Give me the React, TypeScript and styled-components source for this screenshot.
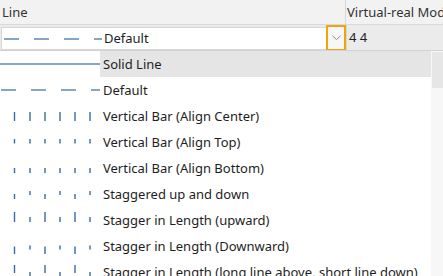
import React from 'react'
import styled, { createGlobalStyle } from 'styled-components'

type LineKind =
  | 'solid'
  | 'dash'
  | 'center'
  | 'top'
  | 'bottom'
  | 'stagger'
  | 'upward'
  | 'downward'
  | 'longShort'

const options: { kind: LineKind; label: string }[] = [
  { kind: 'solid', label: 'Solid Line' },
  { kind: 'dash', label: 'Default' },
  { kind: 'center', label: 'Vertical Bar (Align Center)' },
  { kind: 'top', label: 'Vertical Bar (Align Top)' },
  { kind: 'bottom', label: 'Vertical Bar (Align Bottom)' },
  { kind: 'stagger', label: 'Staggered up and down' },
  { kind: 'upward', label: 'Stagger in Length (upward)' },
  { kind: 'downward', label: 'Stagger in Length (Downward)' },
  { kind: 'longShort', label: 'Stagger in Length (long line above, short line down)' },
]

const BAR_X = [14.5, 30, 45, 60, 75, 90]

// [even bars, odd bars] as y1/y2 inside a 26px row
const barSpans: Record<string, [[number, number], [number, number]]> = {
  center: [[9, 18], [9, 18]],
  top: [[10, 14.5], [10, 14.5]],
  bottom: [[13, 18], [13, 18]],
  stagger: [[13, 18], [10, 14]],
  upward: [[5, 15], [10, 15]],
  downward: [[13.5, 21], [12.5, 16.5]],
  longShort: [[6, 14], [13, 17]],
}

function LinePreview({ kind }: { kind: LineKind }) {
  if (kind === 'solid') {
    return (
      <svg width="100" height="26">
        <line x1="0" y1="13" x2="100" y2="13" stroke="#86a6c6" strokeWidth="2" />
      </svg>
    )
  }
  if (kind === 'dash') {
    return (
      <svg width="100" height="26">
        <line x1="1" y1="13" x2="100" y2="13" stroke="#86a6c6" strokeWidth="2" strokeDasharray="15 15" />
      </svg>
    )
  }
  const spans = barSpans[kind]
  return (
    <svg width="100" height="26">
      {BAR_X.map((x, i) => {
        const [y1, y2] = spans[i % 2]
        return <line key={x} x1={x} y1={y1} x2={x} y2={y2} stroke="#3a6aa4" strokeWidth="1.4" />
      })}
    </svg>
  )
}

function App() {
  return (
    <>
      <GlobalStyle />
      <Frame>
        <HeaderRow>
          <HeaderCell>Line</HeaderCell>
          <HeaderCell $divider>Virtual-real Mode</HeaderCell>
        </HeaderRow>
        <EditRow>
          <ComboCell>
            <ComboField>
              <svg width="100" height="21">
                <line x1="2" y1="11" x2="100" y2="11" stroke="#86a6c6" strokeWidth="2" strokeDasharray="15 15" />
              </svg>
              <ComboText>Default</ComboText>
            </ComboField>
            <DropButton>
              <svg width="9" height="6" viewBox="0 0 9 6">
                <path d="M0.5 0.8 L4.5 4.6 L8.5 0.8" fill="none" stroke="#8a8a8a" strokeWidth="1" />
              </svg>
            </DropButton>
          </ComboCell>
          <ValueCell>4 4</ValueCell>
        </EditRow>
        <DropList>
          <Options>
            {options.map((o) => (
              <Option key={o.label} $selected={o.kind === 'solid'}>
                <Preview>
                  <LinePreview kind={o.kind} />
                </Preview>
                <OptionLabel>{o.label}</OptionLabel>
              </Option>
            ))}
          </Options>
          <ScrollTrack>
            <ScrollThumb />
          </ScrollTrack>
        </DropList>
      </Frame>
    </>
  )
}

const GlobalStyle = createGlobalStyle`
  html, body {
    margin: 0;
    padding: 0;
    background: #ffffff;
  }
  body {
    font-family: 'Noto Sans', 'Open Sans', sans-serif;
    font-size: 13px;
    color: #1e1e1e;
  }
`

const Frame = styled.div`
  width: 443px;
  height: 276px;
  overflow: hidden;
  background: #f0f0f0;
  display: flex;
  flex-direction: column;
`

const HeaderRow = styled.div`
  display: grid;
  grid-template-columns: 345px 1fr;
  height: 24px;
  background: #f2f2f2;
  border-bottom: 1px solid #dadada;
`

const HeaderCell = styled.div<{ $divider?: boolean }>`
  display: flex;
  align-items: center;
  padding-left: ${(p) => (p.$divider ? '1px' : '2px')};
  padding-bottom: 1px;
  border-left: ${(p) => (p.$divider ? '1px solid #d8d8d8' : 'none')};
  white-space: nowrap;
  overflow: hidden;
  color: #333;
`

const EditRow = styled.div`
  display: grid;
  grid-template-columns: 346px 1fr;
  height: 25px;
  background: #ebebeb;
`

const ComboCell = styled.div`
  display: flex;
  align-items: stretch;
  padding-left: 1px;
`

const ComboField = styled.div`
  flex: 1;
  display: flex;
  align-items: center;
  margin: 2px 0 1px 0;
  background: #fff;
  border: 1px solid #d6d6d6;
  border-right: none;
`

const ComboText = styled.span`
  padding: 0 0 2px 2px;
  color: #1e1e1e;
`

const DropButton = styled.div`
  width: 16px;
  border: 2px solid #f0a30a;
  background: #f7f7f7;
  display: flex;
  align-items: center;
  justify-content: center;
`

const ValueCell = styled.div`
  display: flex;
  align-items: center;
  padding: 0 0 2px 2px;
  border-left: 1px solid #d8d8d8;
  color: #1e1e1e;
`

const DropList = styled.div`
  flex: 1;
  display: flex;
  border-top: 1px solid #d2d2d2;
  background: #fff;
  min-height: 0;
`

const Options = styled.div`
  flex: 1;
  display: flex;
  flex-direction: column;
`

const Option = styled.div<{ $selected?: boolean }>`
  flex: none;
  height: 26px;
  display: flex;
  align-items: center;
  background: ${(p) => (p.$selected ? '#e5e5e5' : '#fff')};
  white-space: nowrap;
`

const Preview = styled.div`
  width: 100px;
  height: 26px;
  flex: none;
  background: #fff;
`

const OptionLabel = styled.span`
  padding: 0 0 1px 3px;
  color: #1e1e1e;
`

const ScrollTrack = styled.div`
  width: 11px;
  flex: none;
  background: #f7f7f7;
  padding: 1px 0 0 1px;
`

const ScrollThumb = styled.div`
  height: 36px;
  background: #e6e6e6;
`

export default App
